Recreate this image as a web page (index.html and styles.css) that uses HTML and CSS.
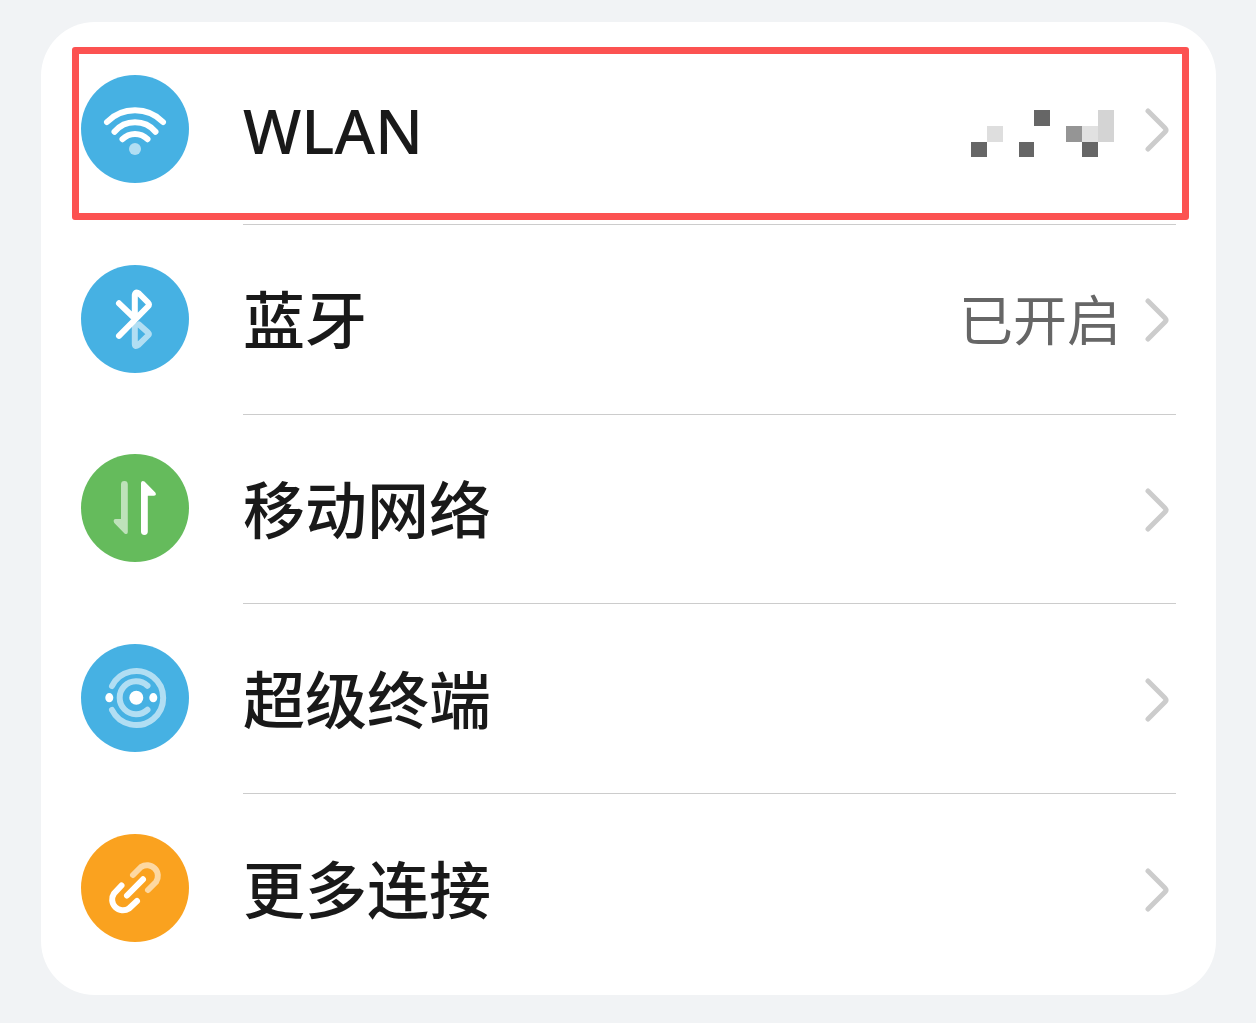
FILE: index.html
```html
<!DOCTYPE html>
<html lang="zh-CN">
<head>
  <meta charset="UTF-8">
  <meta name="viewport" content="width=device-width, initial-scale=1.0">
  <title>设置</title>
  <link rel="stylesheet" href="styles.css">
</head>
<body>

  <nav class="card">
    <a class="row highlighted" href="#wlan">
      <svg class="icon blue" viewBox="0 0 108 108" aria-hidden="true">
        <g class="line">
          <path d="M26 47A39.5 39.5 0 0 1 82 47"/>
          <path d="M33.5 56.7A27 27 0 0 1 74.5 56.7"/>
          <path d="M41.5 64.2A17.7 17.7 0 0 1 66.5 64.2"/>
        </g>
        <circle class="pale-fill" cx="54" cy="74" r="6"/>
      </svg>
      <span class="content">
        <span class="label">WLAN</span>
        <svg class="mosaic" viewBox="0 -8 144 56" shape-rendering="crispEdges" aria-hidden="true">
          <g fill="#666">
            <rect x="0" y="32" width="16" height="15"/>
            <rect x="48" y="32" width="15" height="15"/>
            <rect x="63" y="0" width="16" height="16"/>
            <rect x="111" y="32" width="16" height="15"/>
          </g>
          <rect x="16" y="16" width="16" height="16" fill="#dedede"/>
          <rect x="95" y="16" width="16" height="16" fill="#959595"/>
          <rect x="111" y="16" width="16" height="16" fill="#e1e1e1"/>
          <rect x="127" y="0" width="16" height="32" fill="#d4d4d4"/>
        </svg>
        <svg class="chevron" viewBox="0 0 24 44" aria-hidden="true"><path d="M3 3L20 20Q22 22 20 24L3 41"/></svg>
      </span>
    </a>

    <a class="row" href="#bluetooth">
      <svg class="icon blue" viewBox="0 0 108 108" aria-hidden="true">
        <path class="line pale" d="M58 59.5L67 67.5Q68.5 69 67 70.5L57.5 79.8Q53.8 82.5 53.8 79V60"/>
        <path class="line" d="M38 38.3L53.8 53.5V30Q54.5 26 58 28.5L67 37.5Q69 39.5 67 41.5L38 70.8"/>
      </svg>
      <span class="content">
        <span class="label">蓝牙</span>
        <span class="status">已开启</span>
        <svg class="chevron" viewBox="0 0 24 44" aria-hidden="true"><path d="M3 3L20 20Q22 22 20 24L3 41"/></svg>
      </span>
    </a>

    <a class="row" href="#mobile">
      <svg class="icon green" viewBox="0 0 108 108" aria-hidden="true">
        <path class="pale-fill" d="M40 30.5A3.4 3.4 0 0 1 46.8 30.5V78Q46.8 81 43.5 79.5L33.3 69Q31.5 65.3 34.5 65H40Z"/>
        <path fill="#fff" d="M60 29Q60.5 26 63.5 27.5L74.3 38.5Q76 41.3 73 41.8H66.8V77.5A3.4 3.4 0 0 1 60 77.5Z"/>
      </svg>
      <span class="content">
        <span class="label">移动网络</span>
        <svg class="chevron" viewBox="0 0 24 44" aria-hidden="true"><path d="M3 3L20 20Q22 22 20 24L3 41"/></svg>
      </span>
    </a>

    <a class="row" href="#super-device">
      <svg class="icon blue" viewBox="0 1 108 108" aria-hidden="true">
        <path class="line pale" d="M31 43A27 27 0 1 1 31 67"/>
        <path class="line pale" d="M66.5 42.7A16.5 16.5 0 1 0 66.5 66.7"/>
        <g fill="#fff">
          <circle cx="55.3" cy="54.7" r="7"/>
          <ellipse cx="28.3" cy="54.7" rx="4" ry="4.6"/>
          <ellipse cx="72.3" cy="54.7" rx="4" ry="4.6"/>
        </g>
      </svg>
      <span class="content">
        <span class="label">超级终端</span>
        <svg class="chevron" viewBox="0 0 24 44" aria-hidden="true"><path d="M3 3L20 20Q22 22 20 24L3 41"/></svg>
      </span>
    </a>

    <a class="row" href="#more">
      <svg class="icon orange" viewBox="0 0 108 108" aria-hidden="true">
        <path class="line pale" d="M52 41L60 33A10.8 10.8 0 0 1 75 48L67 56"/>
        <path class="line" d="M40.5 51.5L33 59.5A10.8 10.8 0 0 0 48 74.5L56 67"/>
        <path class="line" d="M46 61.5L62 45.3"/>
      </svg>
      <span class="content">
        <span class="label">更多连接</span>
        <svg class="chevron" viewBox="0 0 24 44" aria-hidden="true"><path d="M3 3L20 20Q22 22 20 24L3 41"/></svg>
      </span>
    </a>
  </nav>

</body>
</html>
```
FILE: styles.css
```css
* {
  box-sizing: border-box;
}

body {
  font-family: "Noto Sans", "Noto Sans CJK SC", sans-serif;
  margin: 0;
  padding: 22px 40px 28px 41px;
  background-color: #f1f3f5;
}

.card {
  display: grid;
  grid-auto-rows: 1fr;
  min-height: calc(100vh - 50px);
  padding: 13px 40px 11px;
  background-color: white;
  border-radius: 54px;
}

.row {
  position: relative;
  display: flex;
  gap: 54px;
  align-items: center;
  color: #191919;
  text-decoration: none;
}

.content {
  display: flex;
  flex: 1;
  align-items: center;
  align-self: stretch;
  padding: 2px 7px 0 0;
  border-bottom: 1px solid #ccc;
}

.row:last-child .content {
  border-bottom: none;
}

/* red frame around the WLAN row */
.highlighted::after {
  content: "";
  position: absolute;
  top: 12px;
  right: -13px;
  bottom: 5px;
  left: -9px;
  border: 7px solid #fc5251;
  border-radius: 3px;
}

.icon {
  flex: none;
  width: 108px;
  height: 108px;
  margin-bottom: 2px;
  border-radius: 50%;
}

.blue {
  background-color: #46b1e3;
}

.green {
  background-color: #65bb5c;
}

.orange {
  background-color: #faa21f;
}

.line {
  fill: none;
  stroke: white;
  stroke-width: 6;
  stroke-linecap: round;
  stroke-linejoin: round;
}

.pale {
  opacity: 0.58;
}

.pale-fill {
  fill: white;
  opacity: 0.58;
}

.label {
  flex: 1;
  font-size: 62px;
  font-weight: 500;
  line-height: 80px;
}

.status {
  margin-right: 24px;
  color: #666;
  font-size: 54px;
  line-height: 80px;
}

.mosaic {
  width: 144px;
  height: 56px;
  margin-right: 30px;
}

.chevron {
  width: 24px;
  height: 44px;
  fill: none;
  stroke: #ccc;
  stroke-width: 5;
  stroke-linecap: round;
}
```
